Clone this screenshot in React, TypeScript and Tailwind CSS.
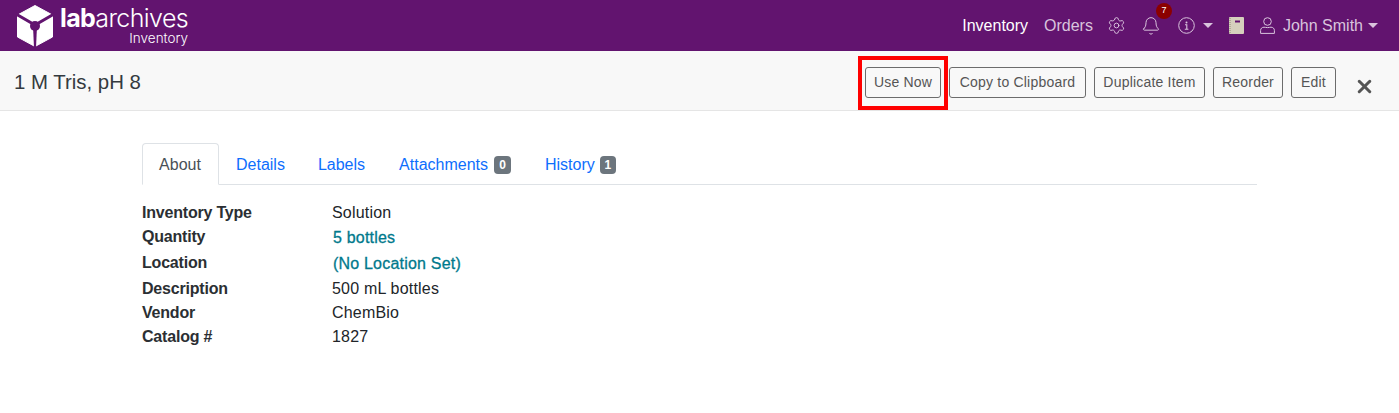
import { Settings, Bell, X } from "lucide-react";

// Item fields
const rows = [
  { label: "Inventory Type", value: "Solution", h: "h-[24px]" },
  { label: "Quantity", value: "5 bottles", link: true, h: "h-[26px]" },
  { label: "Location", value: "(No Location Set)", link: true, h: "h-[26px]" },
  { label: "Description", value: "500 mL bottles", h: "h-[24px]" },
  { label: "Vendor", value: "ChemBio", h: "h-[24px]" },
  { label: "Catalog #", value: "1827", h: "h-[24px]" },
];

const buttons = [
  { label: "Copy to Clipboard", w: "w-[137px]" },
  { label: "Duplicate Item", w: "w-[111px]" },
  { label: "Reorder", w: "w-[70px]" },
  { label: "Edit", w: "w-[45px]" },
];

const btnClass =
  "flex h-[31px] items-center justify-center rounded-[3px] border border-[#6c6c6c] pt-px text-[14px] tracking-[0.2px] text-[#555]";

const Caret = ({ className }: { className: string }) => (
  <span className={`inline-block border-x-[5px] border-t-[5px] border-x-transparent border-t-current ${className}`} />
);

const Logo = () => (
  <svg width="38" height="44" viewBox="16 3 38 44">
    <path d="M35 4.5 L52.5 14 V36 L35 45.5 L17.5 36 V14 Z" fill="white" stroke="white" strokeLinejoin="round" />
    <path d="M16 13 L35 24 L54 13" fill="none" stroke="#62146f" strokeWidth="3" />
    <path d="M33 25 H37 L36 47 H34 Z" fill="#62146f" />
    <circle cx="35" cy="25" r="5" fill="#62146f" />
  </svg>
);

const Notebook = () => (
  <svg width="15" height="17" viewBox="0 0 15 17">
    <rect width="15" height="17" rx="1" fill="#d6d0bd" />
    <rect x="6" y="3.5" width="5" height="2" fill="#62146f" />
    <path d="M1 1v15" stroke="#8f8973" strokeWidth="1" strokeDasharray="1 1" />
  </svg>
);

const InfoIcon = ({ className }: { className: string }) => (
  <svg width="17" height="17" viewBox="0 0 17 17" fill="none" stroke="currentColor" className={className}>
    <circle cx="8.5" cy="8.5" r="7.8" strokeWidth="1" />
    <circle cx="8.5" cy="5.4" r="1" fill="currentColor" stroke="none" />
    <path d="M7 7.8H8.8V12M6.8 12.2H10.4" strokeWidth="1.1" />
  </svg>
);

const UserIcon = ({ className }: { className: string }) => (
  <svg width="15" height="17" viewBox="0 0 15 17" fill="none" stroke="currentColor" strokeWidth="1" className={className}>
    <circle cx="7.5" cy="4.5" r="3.8" />
    <path d="M0.6 16.4V13.5C0.6 11.5 2 10.2 4 10.2C5 10.2 6 10.6 7.5 10.6C9 10.6 10 10.2 11 10.2C13 10.2 14.4 11.5 14.4 13.5V16.4Z" />
  </svg>
);

export default function App() {
  return (
    <div className="h-[413px] bg-white font-['Liberation_Sans',Arial,sans-serif] text-[#212529]">
      <nav className="flex h-[51px] items-center justify-between bg-[#62146f] pl-[16px] pr-[21px]">
        <div className="flex items-center">
          <Logo />
          <div className="ml-[6px] flex flex-col items-end text-white">
            <span className="font-['Inter',sans-serif] text-[25px] leading-[26px] tracking-[-0.6px]">
              <span className="font-bold">lab</span>
              <span className="font-light">archives</span>
            </span>
            <span className="font-['Inter',sans-serif] text-[13.5px] font-light leading-[15px]">Inventory</span>
          </div>
        </div>
        <div className="flex items-center text-[16px] text-[#d9c4dd]">
          <span className="text-white">Inventory</span>
          <span className="ml-[16px]">Orders</span>
          <Settings size={19} strokeWidth={1.2} className="ml-[14px]" />
          <div className="relative ml-[15px]">
            <Bell size={20} strokeWidth={1.2} />
            <span className="absolute -right-[11px] -top-[13px] flex h-[16px] w-[16px] items-center justify-center rounded-full bg-[#8b0000] text-[9px] text-white">
              7
            </span>
          </div>
          <InfoIcon className="ml-[17px]" />
          <Caret className="ml-[8px]" />
          <span className="ml-[16px] flex">
            <Notebook />
          </span>
          <UserIcon className="ml-[16px]" />
          <span className="ml-[8px]">John Smith</span>
          <Caret className="ml-[5px]" />
        </div>
      </nav>

      <header className="flex h-[60px] items-center justify-between border-b border-[#e5e5e5] bg-[#f8f8f8] pl-[14px] pr-[24px] pt-[3px]">
        <h1 className="text-[20.4px] text-[#343a40]">1 M Tris, pH 8</h1>
        <div className="flex items-center gap-[8px]">
          <div className="relative">
            <button className={`${btnClass} w-[76px]`}>Use Now</button>
            <span className="absolute -bottom-[12px] -left-[7px] -right-[7px] -top-[11px] border-[4px] border-[#ff0000]" />
          </div>
          {buttons.map((b) => (
            <button key={b.label} className={`${btnClass} ${b.w}`}>
              {b.label}
            </button>
          ))}
          <X size={21} strokeWidth={3.5} className="ml-[10px] mt-[9px] text-[#555]" />
        </div>
      </header>

      <main className="px-[142px] pt-[32px]">
        <div className="flex h-[42px] border-b border-[#dee2e6] text-[16px] text-[#0d6efd]">
          <div className="-mb-px flex h-[42px] w-[77px] items-center justify-center rounded-t-[4px] border border-[#dee2e6] border-b-white bg-white pr-px pt-[2px] text-[#495057]">
            About
          </div>
          <div className="flex items-center pl-[17px] pr-[16px] pt-[2px]">Details</div>
          <div className="flex items-center px-[17px] pt-[2px]">Labels</div>
          <div className="flex items-center px-[17px] pt-[2px]">
            Attachments
            <span className="ml-[6px] flex h-[18px] w-[17px] items-center justify-center rounded-[4px] bg-[#6c757d] text-[12px] font-bold text-white">0</span>
          </div>
          <div className="flex items-center px-[17px] pt-[2px]">
            History
            <span className="ml-[5px] flex h-[18px] w-[16px] items-center justify-center rounded-[4px] bg-[#6c757d] text-[12px] font-bold text-white">1</span>
          </div>
        </div>

        <div className="pt-[16px] text-[16px]">
          {rows.map((row) => (
            <div key={row.label} className={`flex items-center ${row.h}`}>
              <span className={`w-[190px] font-bold tracking-[-0.2px] text-[#2b2f33] ${row.link ? "mb-[2px]" : ""}`}>
                {row.label}
              </span>
              <span className={row.link ? "ml-px tracking-[0.2px] text-[#00798c] [-webkit-text-stroke:0.3px_#00798c]" : "tracking-[0.2px]"}>
                {row.value}
              </span>
            </div>
          ))}
        </div>
      </main>
    </div>
  );
}
